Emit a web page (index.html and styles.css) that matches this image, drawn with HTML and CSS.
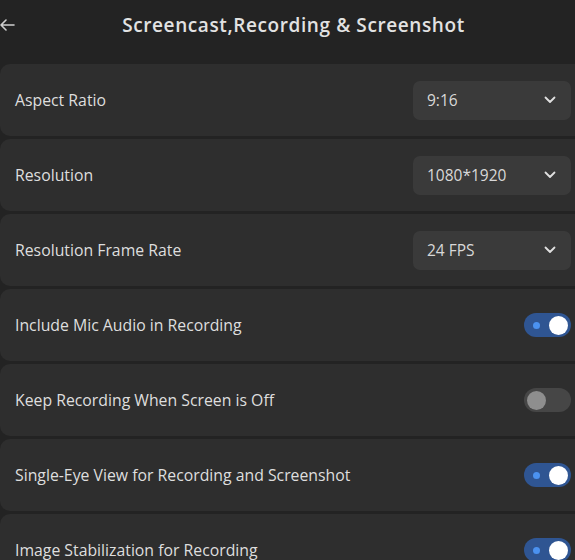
FILE: index.html
```html
<!DOCTYPE html>
<html>
<head>
<meta charset="utf-8">
<link rel="stylesheet" href="styles.css">
</head>
<body>
<div class="page">
  <header class="header">
    <svg class="back" width="16" height="14" viewBox="0 0 16 14"><path d="M15 7H2M7 2L2 7l5 5" fill="none" stroke="#cfcfcf" stroke-width="1.6" stroke-linecap="round" stroke-linejoin="round"/></svg>
    <h1 class="title">Screencast,Recording &amp; Screenshot</h1>
  </header>
  <div class="list">
    <div class="card"><span class="label">Aspect Ratio</span>
      <div class="select"><span>9:16</span><svg width="12" height="8" viewBox="0 0 12 8"><path d="M1.5 1.5L6 6l4.5-4.5" fill="none" stroke="#e0e0e0" stroke-width="1.8" stroke-linecap="round" stroke-linejoin="round"/></svg></div></div>
    <div class="card"><span class="label">Resolution</span>
      <div class="select"><span>1080*1920</span><svg width="12" height="8" viewBox="0 0 12 8"><path d="M1.5 1.5L6 6l4.5-4.5" fill="none" stroke="#e0e0e0" stroke-width="1.8" stroke-linecap="round" stroke-linejoin="round"/></svg></div></div>
    <div class="card"><span class="label">Resolution Frame Rate</span>
      <div class="select"><span>24 FPS</span><svg width="12" height="8" viewBox="0 0 12 8"><path d="M1.5 1.5L6 6l4.5-4.5" fill="none" stroke="#e0e0e0" stroke-width="1.8" stroke-linecap="round" stroke-linejoin="round"/></svg></div></div>
    <div class="card"><span class="label">Include Mic Audio in Recording</span>
      <div class="toggle on"><span class="dot"></span><span class="knob"></span></div></div>
    <div class="card"><span class="label">Keep Recording When Screen is Off</span>
      <div class="toggle off"><span class="knob"></span></div></div>
    <div class="card"><span class="label">Single-Eye View for Recording and Screenshot</span>
      <div class="toggle on"><span class="dot"></span><span class="knob"></span></div></div>
    <div class="card"><span class="label">Image Stabilization for Recording</span>
      <div class="toggle on"><span class="dot"></span><span class="knob"></span></div></div>
  </div>
</div>
</body>
</html>
```

FILE: styles.css
```css
html, body {
  margin: 0;
  padding: 0;
  background: #232323;
}
.page {
  width: 575px;
  height: 560px;
  overflow: hidden;
  font-family: "Open Sans", "Noto Sans", sans-serif;
  color: #dcdcdc;
}
.header {
  position: relative;
  height: 64px;
  display: flex;
  justify-content: center;
}
.back {
  position: absolute;
  left: -1px;
  top: 18px;
}
.title {
  margin: 12px 0 0 12px;
  font-size: 19px;
  font-weight: 600;
  color: #e2e2e2;
  letter-spacing: 0.6px;
}
.list {
  display: flex;
  flex-direction: column;
  gap: 3px;
  margin-right: -14px;
}
.card {
  height: 72px;
  flex: none;
  background: #2e2e2e;
  border-radius: 10px;
  display: flex;
  align-items: center;
  justify-content: space-between;
  padding: 0 18px 0 15px;
}
.label {
  font-size: 15.8px;
  color: #dedede;
}
.select {
  width: 158px;
  height: 39px;
  box-sizing: border-box;
  background: #3a3a3a;
  border-radius: 7px;
  display: flex;
  align-items: center;
  justify-content: space-between;
  padding: 0 15px 0 14px;
  font-size: 15.5px;
  color: #d8d8d8;
}
.toggle {
  width: 47px;
  height: 24px;
  border-radius: 12px;
  display: flex;
  align-items: center;
  box-sizing: border-box;
  padding: 0 3px;
  margin-right: 0;
}
.toggle.on {
  background: #2f5592;
  justify-content: space-between;
  padding-left: 9px;
}
.toggle.off {
  background: #464646;
}
.dot {
  width: 7px;
  height: 7px;
  border-radius: 50%;
  background: #4b92f0;
}
.knob {
  width: 19px;
  height: 19px;
  border-radius: 50%;
}
.toggle.on .knob {
  background: #ffffff;
}
.toggle.off .knob {
  background: #8e8e8e;
}
```
